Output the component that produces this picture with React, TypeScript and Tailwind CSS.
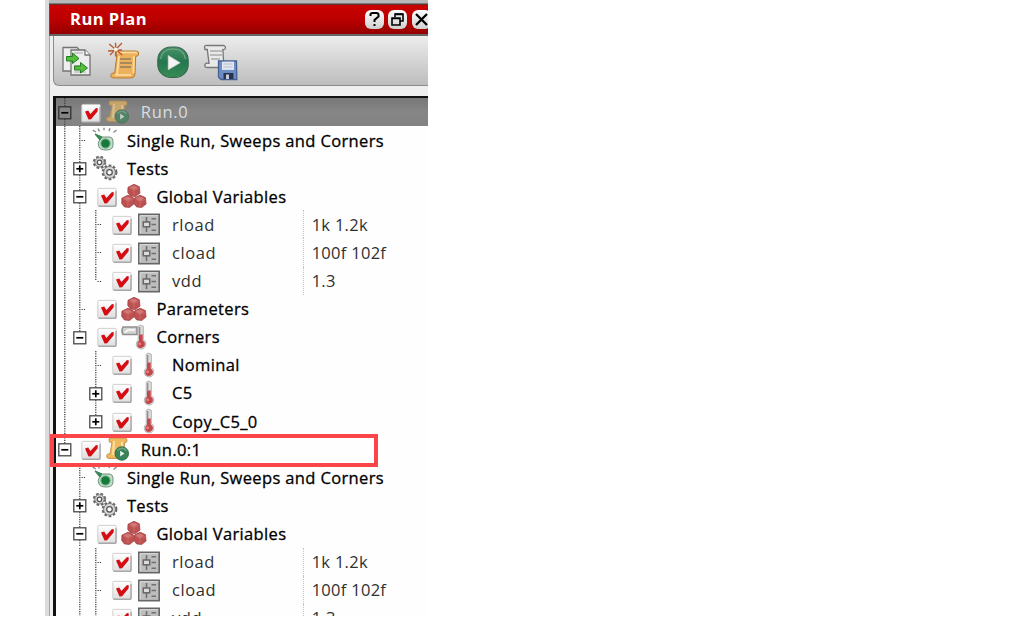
import React from "react";

type IconKind = "run" | "sweep" | "gears" | "cubes" | "variable" | "corners" | "thermo";
type Guide = "none" | "line" | "tee" | "end" | "plus" | "minus" | "plusEnd" | "minusEnd" | "root" | "rootEnd";

interface Row {
  label: string;
  icon: IconKind;
  guides: Guide[];
  checked?: boolean;
  value?: string;
  selected?: boolean;
  faint?: boolean;
}

const children = (outer: Guide): Row[] => [
  { label: "Single Run, Sweeps and Corners", icon: "sweep", guides: [outer, "tee"] },
  { label: "Tests", icon: "gears", guides: [outer, "plus"] },
  { label: "Global Variables", icon: "cubes", guides: [outer, "minus"], checked: true },
  { label: "rload", icon: "variable", guides: [outer, "line", "tee"], checked: true, value: "1k 1.2k" },
  { label: "cload", icon: "variable", guides: [outer, "line", "tee"], checked: true, value: "100f 102f" },
  { label: "vdd", icon: "variable", guides: [outer, "line", "end"], checked: true, value: "1.3" },
  { label: "Parameters", icon: "cubes", guides: [outer, "tee"], checked: true },
  { label: "Corners", icon: "corners", guides: [outer, "minusEnd"], checked: true },
  { label: "Nominal", icon: "thermo", guides: [outer, "none", "tee"], checked: true },
  { label: "C5", icon: "thermo", guides: [outer, "none", "plus"], checked: true },
  { label: "Copy_C5_0", icon: "thermo", guides: [outer, "none", "plusEnd"], checked: true },
];

const rows: Row[] = [
  { label: "Run.0", icon: "run", guides: ["root"], checked: true, selected: true, faint: true },
  ...children("line"),
  { label: "Run.0:1", icon: "run", guides: ["rootEnd"], checked: true },
  ...children("none").slice(0, 6),
];

function GuideCell({ kind }: { kind: Guide }) {
  const box = kind !== "none" && kind !== "line" && kind !== "tee" && kind !== "end";
  const plus = kind === "plus" || kind === "plusEnd";
  const below = kind === "line" || kind === "tee" || kind === "plus" || kind === "minus" || kind === "root";
  return (
    <svg className="h-full w-[15.6px] shrink-0 overflow-visible" viewBox="0 0 15.6 28.1">
      {kind !== "none" && (
        <path d={below ? "M7.8 0V28.1" : "M7.8 0V14"} stroke="#3a3a3a" strokeWidth="1.2" strokeDasharray="1.2 1.14" fill="none" />
      )}
      {(kind === "tee" || kind === "end") && <path d="M9.5 14.5h4" stroke="#3a3a3a" strokeDasharray="1.2 1.14" fill="none" />}
      {box && (
        <>
          <rect x="1.8" y="8.8" width="12" height="12" fill={kind === "root" ? "#858585" : "#fff"} stroke={kind === "root" ? "#333" : "#484848"} strokeWidth="1.3" />
          <path d="M4.3 14.8h7" stroke="#000" strokeWidth="1.7" />
          {plus && <path d="M7.8 11.3v7" stroke="#000" strokeWidth="1.7" />}
        </>
      )}
    </svg>
  );
}

function Check() {
  return (
    <svg className="h-[20px] w-[20px] shrink-0" viewBox="0 0 20 20">
      <defs>
        <linearGradient id="cb" x2="0" y2="1"><stop stopColor="#fff" /><stop offset="1" stopColor="#dedede" /></linearGradient>
      </defs>
      <rect x=".8" y="1.4" width="18.4" height="17.8" rx="1.2" fill="url(#cb)" stroke="#cfc9c9" strokeWidth=".9" />
      <path d="M1.5 19.2h17.5V4" fill="none" stroke="#929292" strokeWidth="1" />
      <path d="M4 8.4l3.2-.9 2.2 3.6L15 5l1.9.4-.4 3.2-6.4 7.6-2.6.2z" fill="#d50c12" />
    </svg>
  );
}

function Hex({ x, y }: { x: number; y: number }) {
  return (
    <g transform={`translate(${x} ${y})`}>
      <path d="M0-6.2L5.3-3.8 6 2.6 1.6 6-3.5 5.5-6.2 2-6-3.2z" fill="#bd5050" stroke="#a34444" strokeWidth=".8" />
      <path d="M-4.5-3.2L0-5 4-2.8 0-.4z" fill="#d47777" />
      <path d="M-4.5-2.5L0 0V5M0 0l4.7-2" stroke="#d06f6f" strokeWidth=".8" fill="none" />
    </g>
  );
}

function Gear({ x, y, r }: { x: number; y: number; r: number }) {
  return (
    <g transform={`translate(${x} ${y})`}>
      <circle r={r} fill="none" stroke="#666" strokeWidth="2.6" strokeDasharray="2.5 1.8" />
      <circle r={r - 0.7} fill="#d6d6d6" stroke="#7a7a7a" strokeWidth="1" />
      <circle r={r * 0.42} fill="#fff" stroke="#555" strokeWidth="1.3" />
    </g>
  );
}

function Thermometer({ x = 0 }: { x?: number }) {
  return (
    <g transform={`translate(${x} 0)`}>
      <path d="M10.2 2.3q2.6-2.4 5.2 0V15.5q3.4 2.2 2.2 6-1.4 4-5 3.4-4.2-.6-4.4-4.4 0-2.8 2-4.5z" fill="#dedada" stroke="#aaa" strokeWidth=".8" />
      <path d="M11 10.5h3.7v6q3 2 2 4.7-1.2 3.2-4.2 2.8-3.3-.6-3.3-3.6 0-2.4 1.8-3.7z" fill="#c5474c" />
      <path d="M11.7 3v8.5" stroke="#888" strokeWidth="1.2" />
      <circle cx="11.6" cy="19.8" r="1.4" fill="#e08587" />
    </g>
  );
}

function TreeIcon({ kind, faint }: { kind: IconKind; faint?: boolean }) {
  return (
    <svg className={faint ? "h-[26px] w-[26px] shrink-0 opacity-65" : "h-[26px] w-[26px] shrink-0"} viewBox="0 0 26 26">
      {kind === "run" && (
        <>
          <path d="M4 3q1-1.5 3-1h13q2.3.3 2 3-.3 1.8-2.4 1.5L19 19q0 3-3 3.5H4q-2.8-.3-2.4-3 .5-2 3.4-1.6L7 6.5 4.3 6z" fill="#efb960" stroke="#c4964f" />
          <path d="M9 5l-1 14M17 6v5" stroke="#ffe0a0" strokeWidth="2" />
          <circle cx="16.8" cy="17.5" r="6.8" fill="#388359" stroke="#286445" strokeWidth=".8" />
          <path d="M12.5 14.5q4-4.5 9 0" stroke="#68a983" strokeWidth="1.5" fill="none" />
          <path d="M15.2 14.8l4.2 2.8-4.2 2.8z" fill="#edf5ef" />
        </>
      )}
      {kind === "sweep" && (
        <>
          <path d="M.8 3.2l3 1.8M6 1.5l1.5 3M12 .8v2.5M18 1.2L17 4M24.5 3l-3 2.5" stroke="#888" strokeWidth="1.4" />
          <path d="M3 7l7 3h8q3 .8 3 4v4q0 5-6.5 5T7 20q-2-4 .7-7z" fill="#c3dbc9" stroke="#71967c" />
          <path d="M3 7l7 3-2 3z" fill="#398957" stroke="#398957" />
          <circle cx="13.5" cy="16.5" r="4.6" fill="#177a3d" stroke="#65ac7d" />
        </>
      )}
      {kind === "gears" && <><Gear x={7.5} y={7.3} r={5.4} /><Gear x={17.5} y={17.3} r={6.6} /></>}
      {kind === "cubes" && <><Hex x={13} y={7.5} /><Hex x={6.9} y={18.4} /><Hex x={19.1} y={18.4} /></>}
      {kind === "variable" && (
        <g>
          <rect x="2.8" y="3.3" width="20.4" height="20.4" fill="#bdbdbd" stroke="#666" strokeWidth="1.6" />
          <path d="M4.2 22.5V4.7h18" stroke="#dadada" fill="none" />
          <path d="M10.5 6v15M15.5 7.8h4.5M15.5 13.5h4.5M15.5 19.2h4.5" stroke="#707070" strokeWidth="1.6" />
          <rect x="7.3" y="11" width="6.4" height="4.8" fill="#ddd" stroke="#666" strokeWidth="1.5" />
        </g>
      )}
      {kind === "corners" && (
        <>
          <path d="M2 3h14v7.5H2q-2-3.5 0-7.5z" fill="#d3d3d3" stroke="#909090" strokeWidth="1.6" />
          <path d="M4 8.5l3-2.5h7" stroke="#fff" strokeWidth="1.6" fill="none" />
          <Thermometer x={7} />
        </>
      )}
      {kind === "thermo" && <Thermometer />}
    </svg>
  );
}

function TreeRow({ row }: { row: Row }) {
  return (
    <div className={row.selected ? "flex h-[28.1px] shrink-0 items-center bg-linear-to-b from-[#777] via-[#868686] to-[#828282]" : "flex h-[28.1px] shrink-0 items-center"}>
      <div className="flex h-full shrink-0 pl-[0.7px]">
        {row.guides.map((g, i) => <GuideCell key={i} kind={g} />)}
      </div>
      {row.checked && <div className="flex w-[33px] shrink-0 pt-px pl-[9px]"><Check /></div>}
      <div className={row.checked ? "flex w-[35.5px] shrink-0" : "flex w-[39px] shrink-0 pl-[4px]"}><TreeIcon kind={row.icon} faint={row.faint} /></div>
      <span className={row.selected ? "tracking-[0.7px] whitespace-nowrap text-[#d9dde3]" : row.value ? "w-[130.7px] pt-[1.5px] tracking-[0.6px] whitespace-nowrap text-[#303030]" : "pt-[1.5px] tracking-[0.36px] whitespace-nowrap text-black [-webkit-text-stroke:0.3px_#000]"}>
        {row.label}
      </span>
      {row.value && <span className="flex h-full items-center border-l border-dotted border-[#c4c4c4] pt-[1.5px] pl-[8px] tracking-[0.28px] whitespace-nowrap text-[#303030]">{row.value}</span>}
    </div>
  );
}

function Toolbar() {
  return (
    <div className="ml-[3px] flex h-[50px] shrink-0 items-center rounded-bl-md border-b border-l border-[#8c8c8c] bg-linear-to-b from-[#ededed] to-[#bdbdbd] pl-[5px]">
      <svg className="mt-[1px] h-[36px] w-[36px] shrink-0" viewBox="0 0 36 36">
        <g fill="#eee" stroke="#737373" strokeWidth="1.3">
          <path d="M4 4.5h14l2 2V28H4z" /><path d="M12 7h14l5 5v20H12z" /><path d="M26 7v5h5" fill="#fff" />
        </g>
        <path d="M15 10h9M15 23h11M15 29h12" stroke="#aaa" />
        <path d="M7.5 13.5h6V10l6.5 5.5-6.5 5V18h-6z" fill="#58bd3d" stroke="#237d21" />
        <path d="M15.5 23h6v-3.5l7 5.5-7 5v-3h-6z" fill="#58bd3d" stroke="#237d21" />
      </svg>
      <svg className="mt-[2px] ml-[12px] h-[40px] w-[36px] shrink-0" viewBox="0 0 36 40">
        <path d="M9 10q2-2 4-1h16q3 0 2.7 3-.4 2.7-3 2.4L28 32q-.4 4-4 4H7q-3.5.2-3.3-2.6.4-3 4-2.4L9.8 14 8 13z" fill="#edb15d" stroke="#b77b32" />
        <path d="M12 14L10 33M27 14l-.6 17" stroke="#ffdd9b" strokeWidth="1.8" />
        <path d="M10 10.5h20M8 33h16" stroke="#ffe0a4" strokeWidth="1.4" />
        <path d="M13 17h11M13 21h12M13 25h11" stroke="#8e7e5c" strokeWidth="1.3" />
        <path d="M8.5.8l.6 14M2.2 2l13 11M1 9l14-1M15 1L3 13" stroke="#b65c32" strokeWidth="1.4" />
        <circle cx="8.8" cy="7.5" r="2" fill="#fff2db" />
      </svg>
      <svg className="mt-[2px] ml-[13px] h-[36px] w-[34px] shrink-0" viewBox="0 0 34 36">
        <defs><linearGradient id="go" x2="0" y2="1"><stop stopColor="#48926a" /><stop offset=".5" stopColor="#25774d" /><stop offset="1" stopColor="#388c55" /></linearGradient></defs>
        <rect x="1.8" y="3" width="30.4" height="30.4" rx="13" fill="url(#go)" stroke="#376c50" strokeWidth="1.2" />
        <path d="M4.5 15Q6 5 17 5t12.5 10" stroke="#7cab8c" strokeWidth="1.2" fill="none" />
        <path d="M12.2 11.5l12 7.3-12 7z" fill="#f3f3f3" stroke="#d5d5d5" strokeWidth=".6" />
      </svg>
      <svg className="mt-[4px] ml-[11px] h-[40px] w-[38px] shrink-0" viewBox="0 0 38 40">
        <path d="M3.5 4q.3-2 2.8-1.5h16q2.7.5 2 3-.8 1.5-2.4 1l1 18H6q-2.8-.3-2-3.2 1-1.6 4-1L6.3 6.5H4z" fill="#e9e9e9" stroke="#777" strokeWidth="1.3" />
        <path d="M9 8h12M9 12h12M10 16h9" stroke="#8c8c8c" strokeWidth="1.2" />
        <path d="M17.5 18h18l.3 18.5H20L17.5 34z" fill="#6d8dc3" stroke="#455f92" strokeWidth="1.3" />
        <path d="M21 18.6h12v8.3H21z" fill="#e1e7f2" />
        <path d="M22.5 21h9M22.5 24h9" stroke="#b6bcc8" />
        <path d="M22.5 30h10v6h-10z" fill="#28344f" /><path d="M25 31.5h3V36h-3z" fill="#c8ccd6" />
      </svg>
    </div>
  );
}

function TitleButton({ children }: { children: React.ReactNode }) {
  return (
    <button className="flex size-[19px] shrink-0 items-center justify-center rounded-[6px] bg-linear-to-b from-white to-[#cfcfcf]">
      <svg className="size-[19px]" viewBox="0 0 19 19" fill="none" stroke="#000" strokeWidth="1.6">{children}</svg>
    </button>
  );
}

export default function App() {
  return (
    <main className="h-[617px] w-full overflow-hidden bg-white pl-[45px] font-['Open_Sans','Noto_Sans',sans-serif] text-[16.5px] leading-none">
      <section className="relative flex h-[616px] w-[382.5px] flex-col overflow-hidden border-l-4 border-[#d8dcdf] bg-[#efefef]">
        <div className="h-[4px] shrink-0 border-b border-[#777] bg-[#b8b8b8]" />
        <header className="flex h-[32px] shrink-0 items-center border-t border-b-2 border-l border-[#6b3030] border-b-[#666] border-l-[#555] bg-linear-to-b from-[#c90000] via-[#bc0000] to-[#950000] pl-[20px] text-white">
          <h1 className="w-[294.5px] shrink-0 text-[16.5px] font-bold tracking-[0.5px]">Run Plan</h1>
          <div className="-mt-[1px] flex shrink-0 gap-[4.5px]">
            <TitleButton><path d="M5.5 6V4.5q0-1.5 2-1.5h4q2 0 2 1.5v2L9.5 10v2M9.5 14v2" strokeWidth="2" /></TitleButton>
            <TitleButton><path d="M7 7V4h8v7h-3" /><path d="M4 8h8v7H4zM7 4.4h8M4 8.4h8" /></TitleButton>
            <TitleButton><path d="M4 4l11 11M15 4L4 15" strokeWidth="2.3" /></TitleButton>
          </div>
        </header>
        <div className="flex min-h-0 flex-1 flex-col border-l border-[#a5a5a5]">
          <Toolbar />
          <div className="mt-[10px] ml-[3px] flex min-h-0 flex-1 flex-col overflow-hidden border-t-2 border-l-[3px] border-[#111] bg-[#fefefe]">
            {rows.map((row, i) => <TreeRow key={i} row={row} />)}
          </div>
        </div>
      </section>
      <div className="pointer-events-none absolute top-[434px] left-[50px] h-[33px] w-[327.5px] border-4 border-[#fb4649]" />
    </main>
  );
}
